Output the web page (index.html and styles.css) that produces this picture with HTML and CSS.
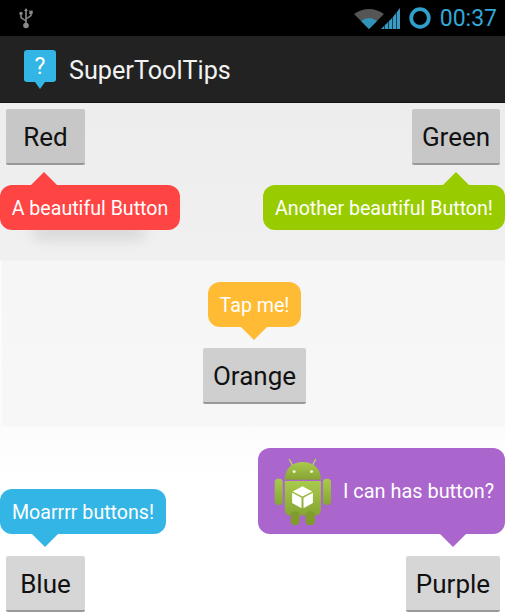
FILE: index.html

```html
<!DOCTYPE html>
<html lang="en">
<head>
  <meta charset="UTF-8">
  <title>SuperToolTips</title>
  <link rel="stylesheet" href="styles.css">
</head>
<body>
  <div class="status-bar">
    <svg class="usb" width="16" height="22" viewBox="0 0 16 22">
      <path d="M8 1 L10 4 H8.8 V17 H7.2 V4 H6 Z" fill="#8a8a8a"/>
      <circle cx="8" cy="18.5" r="2.8" fill="#8a8a8a"/>
      <path d="M8 14 L3 10.5 V7.5 M8 12 L13 8.5 V6.5" fill="none" stroke="#8a8a8a" stroke-width="1.5"/>
      <circle cx="3" cy="6.5" r="1.7" fill="#8a8a8a"/>
      <rect x="11.3" y="3.6" width="3.4" height="3.4" fill="#8a8a8a"/>
    </svg>
    <div class="status-right">
      <svg class="wifi" width="30" height="21" viewBox="0 0 30 21">
        <path d="M0 6 Q15 -4 30 6 L15 21 Z" fill="#555"/>
        <path d="M7 13 Q15 7 23 13 L15 21 Z" fill="#2f93ba"/>
      </svg>
      <svg class="signal" width="19" height="22" viewBox="0 0 19 22">
        <path d="M0 22 L3 19 V22 Z M3.6 22 V18.4 L7 15 V22 Z M7.6 22 V14.4 L11 11 V22 Z M11.6 22 V10.4 L15 6 V22 Z M15.6 22 V5.4 L19 1 V22 Z" fill="#3a9cc4"/>
      </svg>
      <svg class="ring" width="24" height="24" viewBox="0 0 24 24">
        <circle cx="12" cy="12" r="8.8" fill="none" stroke="#2f9fcb" stroke-width="3.8"/>
      </svg>
      <span class="clock">00:37</span>
    </div>
  </div>

  <div class="action-bar">
    <svg class="app-icon" width="32" height="40" viewBox="0 0 32 40">
      <path d="M3 0 H29 Q32 0 32 3 V29 Q32 32 29 32 H21 L16 39 L11 32 H3 Q0 32 0 29 V3 Q0 0 3 0 Z" fill="#33b5e5"/>
      <text x="16" y="24" text-anchor="middle" class="app-icon-mark">?</text>
    </svg>
    <span class="app-title">SuperToolTips</span>
  </div>

  <div class="content">
    <div class="row row-top">
      <div class="group">
        <button class="btn btn-red">Red</button>
        <div class="tip tip-red tip-below">A beautiful Button</div>
      </div>
      <div class="group group-right">
        <button class="btn btn-green">Green</button>
        <div class="tip tip-green tip-below">Another beautiful Button!</div>
      </div>
    </div>

    <div class="row row-middle">
      <div class="group group-center">
        <div class="tip tip-orange tip-above">Tap me!</div>
        <button class="btn btn-orange">Orange</button>
      </div>
    </div>

    <div class="row row-bottom">
      <div class="group">
        <div class="tip tip-blue tip-above">Moarrrr buttons!</div>
        <button class="btn btn-blue">Blue</button>
      </div>
      <div class="group group-right">
        <div class="tip tip-purple tip-above">
          <svg class="android" width="57" height="67" viewBox="28 20 170 200">
            <defs>
              <linearGradient id="droid" x1="0" y1="0" x2="0" y2="1">
                <stop offset="0" stop-color="#a9ca4c"/>
                <stop offset="1" stop-color="#86a433"/>
              </linearGradient>
            </defs>
            <path d="M84 44 L74 24 M142 44 L152 24" stroke="#b6cf6a" stroke-width="4" stroke-linecap="round"/>
            <path d="M60 85 C60 50 84 32 114 32 C144 32 168 50 168 85 Z" fill="url(#droid)"/>
            <circle cx="88" cy="60" r="4.5" fill="#eef3d8"/>
            <circle cx="140" cy="60" r="4.5" fill="#eef3d8"/>
            <path d="M60 89 H168 V172 Q168 192 148 192 H80 Q60 192 60 172 Z" fill="url(#droid)"/>
            <rect x="30" y="82" width="24" height="78" rx="11" fill="url(#droid)"/>
            <rect x="174" y="82" width="24" height="78" rx="11" fill="url(#droid)"/>
            <rect x="78" y="180" width="26" height="40" rx="11" fill="#7f9c2c"/>
            <rect x="122" y="180" width="28" height="40" rx="11" fill="#7f9c2c"/>
            <path d="M113 104 L142 120 L113 135 L84 120 Z M82 124 L110 139 V170 L82 154 Z M116 139 L144 124 V154 L116 170 Z" fill="#fff"/>
          </svg>
          <span>I can has button?</span>
        </div>
        <button class="btn btn-purple">Purple</button>
      </div>
    </div>
  </div>
</body>
</html>
```

FILE: styles.css

```css
html, body {
  margin: 0;
  padding: 0;
}
body {
  width: 505px;
  height: 616px;
  overflow: hidden;
  font-family: 'Roboto', sans-serif;
  background: #fff;
}

/* status bar */
.status-bar {
  height: 36px;
  background: #000;
  display: flex;
  align-items: center;
  justify-content: space-between;
  padding: 0 8px 0 18px;
  box-sizing: border-box;
}
.usb {
  display: block;
}
.status-right {
  display: flex;
  align-items: center;
}
.signal {
  margin-left: -3px;
  margin-right: 8px;
}
.ring {
  margin-right: 8px;
}
.clock {
  color: #33a7d6;
  font-size: 23px;
}

/* action bar */
.action-bar {
  height: 67px;
  background: #222;
  border-bottom: 1px solid #111;
  box-sizing: border-box;
  display: flex;
  align-items: center;
  padding: 0 0 0 24px;
}
.app-icon {
  margin-top: 1px;
  margin-right: 13px;
}
.app-icon-mark {
  fill: #fff;
  font-family: 'Roboto', sans-serif;
  font-size: 23px;
}
.app-title {
  color: #f2f2f2;
  font-size: 25.2px;
  margin-top: 2px;
}

/* main area */
.content {
  height: 513px;
  box-sizing: border-box;
  padding-top: 6px;
  background:
    linear-gradient(#fbfbfb, #fbfbfb) 0 158px / 2px 165px no-repeat,
    linear-gradient(to bottom, #ededed 0, #f0f0f0 157px, #f6f6f6 158px, #f7f7f7 323px, #fcfcfc 324px, #fff 380px);
  display: flex;
  flex-direction: column;
  isolation: isolate;
}
.row {
  display: flex;
  justify-content: space-between;
}
.row-middle {
  justify-content: center;
  margin-top: 52px;
  padding-left: 4px;
}
.row-bottom {
  margin-top: 44px;
  align-items: flex-end;
}
.group {
  display: flex;
  flex-direction: column;
  align-items: flex-start;
}
.group-right {
  align-items: flex-end;
}
.group-center {
  align-items: center;
}

.btn {
  height: 56px;
  padding: 2px 0 0;
  border: 0;
  border-bottom: 2px solid #999;
  border-radius: 2px;
  background: rgba(0,0,0,0.16);
  color: #111;
  font-family: 'Roboto', sans-serif;
  font-size: 26px;
  box-sizing: border-box;
}
.btn-red, .btn-blue {
  width: 79px;
  margin-left: 6px;
}
.btn-green {
  width: 88px;
  margin-right: 5px;
}
.btn-orange {
  width: 103px;
}
.btn-purple {
  width: 94px;
  margin-right: 5px;
}

/* tooltips */
.tip {
  position: relative;
  height: 45px;
  border-radius: 12px;
  color: #fff;
  font-size: 19.6px;
  padding-top: 1px;
  display: flex;
  align-items: center;
  justify-content: center;
  box-sizing: border-box;
}
.tip::before {
  content: "";
  position: absolute;
  width: 0;
  height: 0;
  border-left: 13px solid transparent;
  border-right: 13px solid transparent;
}
.tip-below {
  margin-top: 20px;
}
.tip-below::before {
  top: -13px;
  border-bottom: 13px solid var(--tip);
}
.tip-above {
  margin-bottom: 22px;
}
.tip-above::before {
  bottom: -13px;
  border-top: 13px solid var(--tip);
}

.tip-red {
  --tip: #ff4444;
  background: #ff4444;
  width: 180px;
}
.tip-red::before {
  left: 31px;
}
.tip-red::after {
  content: "";
  position: absolute;
  z-index: -1;
  left: 34px;
  right: 36px;
  top: 36px;
  height: 8px;
  box-shadow: 0 7px 15px rgba(0,0,0,0.2);
}
.tip-green {
  --tip: #99cc00;
  background: #99cc00;
  width: 242px;
}
.tip-green::before {
  right: 36px;
}
.tip-orange {
  --tip: #ffbb33;
  background: #ffbb33;
  width: 93px;
  margin-bottom: 21px;
}
.tip-orange::before {
  left: 33px;
}
.tip-blue {
  --tip: #33b5e5;
  background: #33b5e5;
  width: 166px;
}
.tip-blue::before {
  left: 32px;
}
.tip-purple {
  --tip: #aa66cc;
  background: #aa66cc;
  width: 247px;
  height: 86px;
  justify-content: flex-start;
  padding-left: 16px;
  gap: 12px;
  font-size: 19.9px;
}
.tip-purple::before {
  right: 39px;
}
.android {
  display: block;
}
```
